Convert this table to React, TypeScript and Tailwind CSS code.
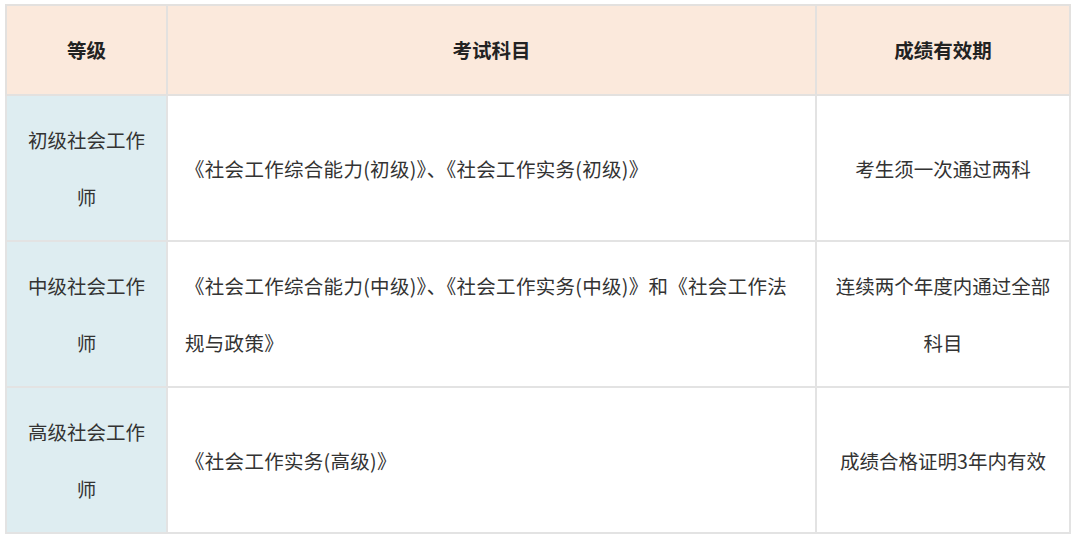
import React from "react";

const rows = [
  {
    level: "初级社会工作师",
    subjects: "《社会工作综合能力(初级)》、《社会工作实务(初级)》",
    valid: "考生须一次通过两科",
  },
  {
    level: "中级社会工作师",
    subjects: "《社会工作综合能力(中级)》、《社会工作实务(中级)》和《社会工作法规与政策》",
    valid: "连续两个年度内通过全部科目",
  },
  {
    level: "高级社会工作师",
    subjects: "《社会工作实务(高级)》",
    valid: "成绩合格证明3年内有效",
  },
];

const App = () => {
  return (
    <div
      className="w-[1080px] h-[543px] bg-white pt-[4px] pl-[5px]"
      style={{ fontFamily: '"Noto Sans CJK SC", "Noto Sans", sans-serif' }}
    >
      <table className="table-fixed border-collapse w-[1064px] text-[19.5px] text-[#333]">
        <colgroup>
          <col className="w-[161px]" />
          <col className="w-[649px]" />
          <col className="w-[254px]" />
        </colgroup>
        <thead>
          <tr className="h-[90px] bg-[#fbe9dc] text-[#222]">
            <th className="border-2 border-[#e3e1df] font-bold text-center">等级</th>
            <th className="border-2 border-[#e3e1df] font-bold text-center">考试科目</th>
            <th className="border-2 border-[#e3e1df] font-bold text-center">成绩有效期</th>
          </tr>
        </thead>
        <tbody>
          {rows.map((row, index) => (
            <tr key={index} className="h-[146px]">
              <td className="border-2 border-[#e3e3e3] bg-[#deedf1] px-[16px] text-center leading-[57px]">
                {row.level}
              </td>
              <td className="border-2 border-[#e3e3e3] px-[17px] leading-[57px] tracking-[0.3px]">
                {row.subjects}
              </td>
              <td className="border-2 border-[#e3e3e3] px-[16px] text-center leading-[57px]">
                {row.valid}
              </td>
            </tr>
          ))}
        </tbody>
      </table>
    </div>
  );
};

export default App;
